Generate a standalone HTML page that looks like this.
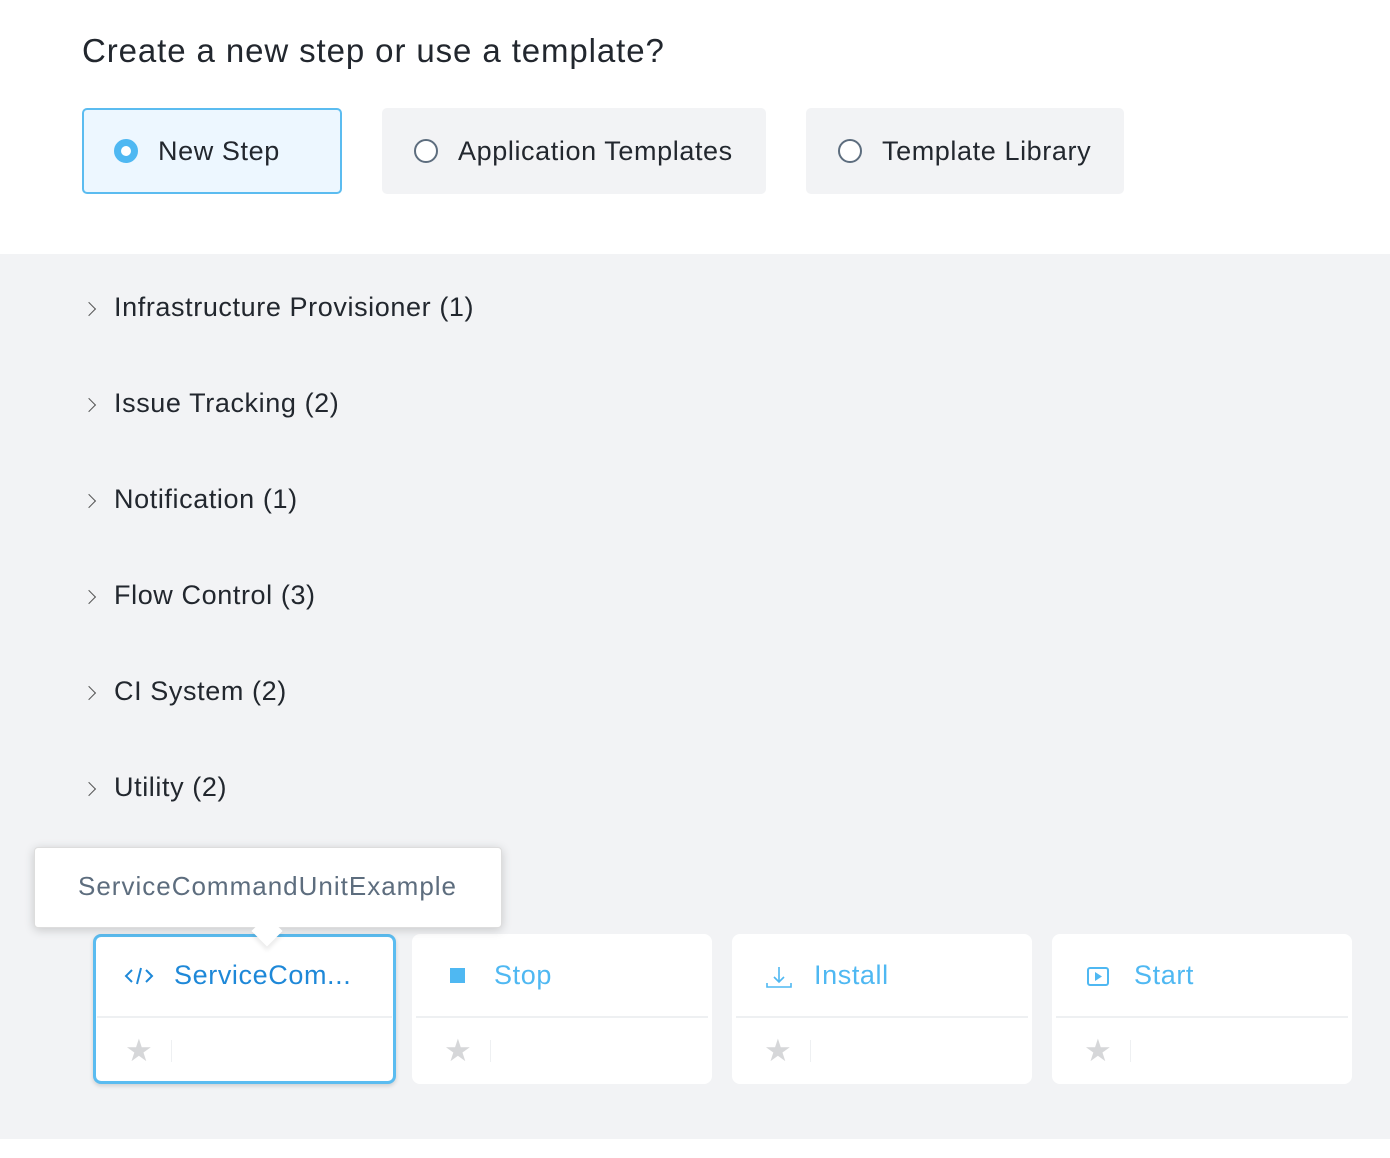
<!DOCTYPE html>
<html><head><meta charset="utf-8"><style>
*{box-sizing:border-box;margin:0;padding:0}
body{width:1390px;height:1158px;background:#fff;font-family:"Liberation Sans",sans-serif;position:relative;overflow:hidden;color:#22272e}
.abs{position:absolute}
h1{position:absolute;left:82px;top:32px;font-size:33px;font-weight:400;color:#22272e;letter-spacing:0.9px}
.opt{position:absolute;top:108px;height:86px;border-radius:5px;background:#f2f3f5;font-size:27px;letter-spacing:0.6px;color:#22272e;display:flex;align-items:center}
.opt .r{width:24px;height:24px;border-radius:50%;border:2px solid #5d6d7e;margin-left:32px;margin-right:20px;background:#fff}
.sel{background:#edf7ff;border:2px solid #5bbcf0}
.sel .r{border:7px solid #4fb8f2;width:24px;height:24px;margin-left:30px}
.gray{position:absolute;left:0;top:254px;width:1390px;height:885px;background:#f2f3f5}
.cat{position:absolute;left:114px;font-size:27px;letter-spacing:0.6px;color:#22272e;line-height:30px}
.chev{position:absolute;left:84px;width:10px;height:10px;border-right:1.6px solid #555;border-top:1.6px solid #555;transform:rotate(45deg)}
.card{position:absolute;top:934px;width:300px;height:150px;background:#fff;border-radius:8px}
.card .t{position:absolute;left:82px;top:26px;font-size:27px;letter-spacing:0.6px;color:#4fb8f2}
.card .d{position:absolute;left:4px;right:4px;top:82px;height:2px;background:#eef0f2}
.card .s{position:absolute;left:32px;top:99px;font-size:31px;color:#d6d7d9}
.card .v{position:absolute;left:78px;top:106px;width:1px;height:22px;background:#eef0f2}
.card svg{position:absolute;left:34px;top:31px}
</style></head><body>
<h1>Create a new step or use a template?</h1>
<div class="opt sel" style="left:82px;width:260px"><div class="r"></div>New Step</div>
<div class="opt" style="left:382px;width:384px"><div class="r"></div>Application Templates</div>
<div class="opt" style="left:806px;width:318px"><div class="r"></div>Template Library</div>
<div class="gray"></div>
<div class="chev" style="top:304px"></div><div class="cat" style="top:292px">Infrastructure Provisioner (1)</div>
<div class="chev" style="top:400px"></div><div class="cat" style="top:388px">Issue Tracking (2)</div>
<div class="chev" style="top:496px"></div><div class="cat" style="top:484px">Notification (1)</div>
<div class="chev" style="top:592px"></div><div class="cat" style="top:580px">Flow Control (3)</div>
<div class="chev" style="top:688px"></div><div class="cat" style="top:676px">CI System (2)</div>
<div class="chev" style="top:784px"></div><div class="cat" style="top:772px">Utility (2)</div>

<div class="card" style="left:93px;width:303px;border:3px solid #5bbcf0;box-shadow:0 2px 4px rgba(0,0,0,.15)">
<svg width="30" height="20" viewBox="0 0 30 20" style="left:28px;top:29px"><path d="M8 4 L2 10 L8 16 M22 4 L28 10 L22 16 M17 2 L13 18" stroke="#1e88d8" stroke-width="2" fill="none"/></svg>
<div class="t" style="left:78px;top:23px;color:#1e88d8">ServiceCom...</div>
<div class="d" style="left:1px;right:1px;top:79px"></div><div class="s" style="left:29px;top:96px">★</div><div class="v" style="left:75px;top:103px"></div></div>

<div class="card" style="left:412px"><svg width="20" height="20"><rect x="4" y="3" width="15" height="15" fill="#4fb8f2"/></svg><div class="t">Stop</div><div class="d"></div><div class="s">★</div><div class="v"></div></div>
<div class="card" style="left:732px"><svg width="30" height="24"><path d="M13 2 V17 M8 12 L13 17 L18 12 M1 18 V22 H25 V18" stroke="#4fb8f2" stroke-width="1.6" fill="none"/></svg><div class="t">Install</div><div class="d"></div><div class="s">★</div><div class="v"></div></div>
<div class="card" style="left:1052px"><svg width="30" height="24"><rect x="2" y="3" width="20" height="17" rx="2" stroke="#4fb8f2" stroke-width="2" fill="none"/><path d="M9 7 L16 11.5 L9 16Z" fill="#4fb8f2"/></svg><div class="t">Start</div><div class="d"></div><div class="s">★</div><div class="v"></div></div>

<div class="abs" style="left:34px;top:847px;width:468px;height:81px;background:#fff;border-radius:4px;box-shadow:0 2px 10px rgba(0,0,0,.18);border:1px solid #ddd"></div>
<div class="abs" style="left:256px;top:920px;width:22px;height:22px;background:#fff;transform:rotate(45deg);box-shadow:3px 3px 4px rgba(0,0,0,.08)"></div>
<div class="abs" style="left:35px;top:848px;width:466px;height:79px;background:#fff;border-radius:4px"></div>
<div class="abs" style="left:78px;top:871px;font-size:26px;letter-spacing:1px;color:#5d6d7e">ServiceCommandUnitExample</div>
</body></html>
